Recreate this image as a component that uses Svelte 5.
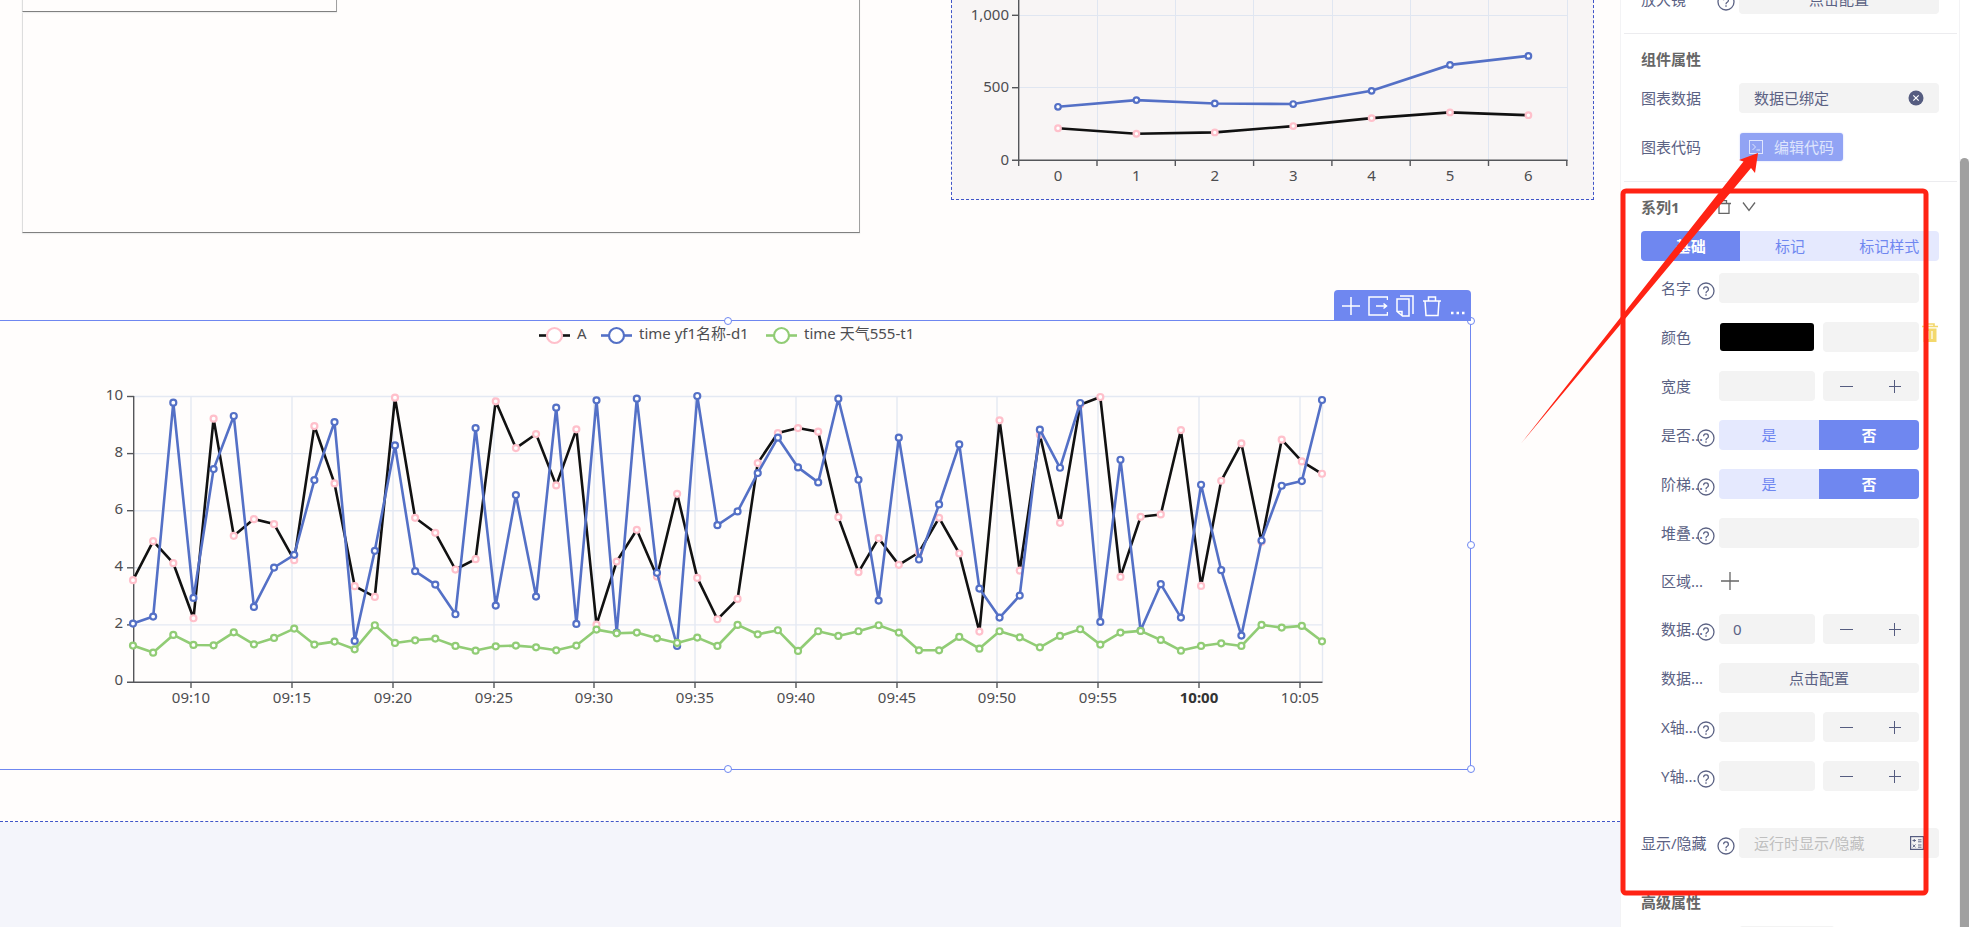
<script>
  const rows = [
    { id: 'name', label: '名字', help: true, kind: 'text' },
    { id: 'color', label: '颜色', help: false, kind: 'color' },
    { id: 'width', label: '宽度', help: false, kind: 'number', value: '' },
    { id: 'smooth', label: '是否...', help: true, kind: 'toggle' },
    { id: 'step', label: '阶梯...', help: true, kind: 'toggle' },
    { id: 'stack', label: '堆叠...', help: true, kind: 'text' },
    { id: 'area', label: '区域...', help: false, kind: 'add' },
    { id: 'offset', label: '数据...', help: true, kind: 'number', value: '0' },
    { id: 'dataset', label: '数据...', help: false, kind: 'config' },
    { id: 'xaxis', label: 'X轴...', help: true, kind: 'number', value: '' },
    { id: 'yaxis', label: 'Y轴...', help: true, kind: 'number', value: '' }
  ];

  // Readings are stored as counts; 857 counts are 10 units on the axis.
  const FULL = 857;
  const series = [
    { name: 'A', line: '#111', dot: '#ffc0cb', data: [305,422,356,191,789,438,488,473,365,767,595,287,255,852,492,447,337,368,841,701,743,589,757,172,361,456,316,564,312,188,249,656,746,761,750,494,329,431,351,388,492,385,151,784,334,741,477,831,854,315,495,502,755,288,603,715,420,726,661,624] },
    { name: 'time yf1名称-d1', line: '#5470c6', dot: '#5470c6', data: [175,196,837,252,638,797,225,343,381,605,779,123,393,709,332,292,203,761,229,560,256,822,174,844,148,849,327,108,857,470,511,626,732,643,598,849,606,244,732,367,532,712,280,193,259,756,642,836,180,666,154,293,193,591,335,139,424,588,602,845] },
    { name: 'time 天气555-t1', line: '#91cc75', dot: '#91cc75', data: [109,88,141,111,110,149,113,132,160,112,121,98,170,117,125,130,108,94,107,109,104,95,109,157,146,148,131,117,133,108,171,143,155,93,152,138,152,170,148,95,95,135,100,152,134,104,138,158,112,148,153,126,94,108,116,108,171,163,168,122] }
  ];
  const px = (i) => 133 + (i * 1189) / 59;
  const py = (v) => 362 - (v / FULL) * 286;
  const times = ['09:10','09:15','09:20','09:25','09:30','09:35','09:40','09:45','09:50','09:55','10:00','10:05'];
  const tx = (i) => Math.round(191.3 + i * 100.75);
  const legendX = [539, 601, 766];

  const small = [
    { line: '#111', dot: '#ffc0cb', data: [219, 181, 190, 234, 289, 328, 309] },
    { line: '#5470c6', dot: '#5470c6', data: [367, 413, 390, 386, 477, 656, 718] }
  ];
  const sx = (i) => 106 + i * 78.4;
  const sy = (v) => 160 - v * 0.145;
  const path = (data, fx, fy) => data.map((v, i) => `${fx(i).toFixed(1)},${fy(v).toFixed(1)}`).join(' ');
</script>

{#snippet help()}
  <button class="help" aria-label="帮助">
    <svg viewBox="0 0 18 18" width="18" height="18" fill="none" stroke="#5b6284" stroke-width="1.3">
      <circle cx="9" cy="9" r="8" />
      <path d="M6.6 7.2a2.4 2.4 0 1 1 3.6 2.1c-.8.5-1.2.9-1.2 1.9" />
      <circle cx="9" cy="13" r=".5" fill="#5b6284" stroke-width=".6" />
    </svg>
  </button>
{/snippet}

<div class="app">
  <main class="stage">
    <div class="sheet">
      <div class="frame outer"></div>
      <div class="frame inner"></div>

      <div class="mini">
        <svg width="641" height="199" role="img" aria-label="折线图">
          <g stroke="#e0e6f1">
            {#each [1, 2, 3, 4, 5, 6, 7] as i}
              <line x1={Math.round(66.5 + i * 78.3) + 0.5} x2={Math.round(66.5 + i * 78.3) + 0.5} y1="0" y2="160" />
            {/each}
            <line x1="67" x2="615" y1="15.5" y2="15.5" />
            <line x1="67" x2="615" y1="87.5" y2="87.5" />
          </g>
          <g stroke="#55565a" stroke-width="1.4">
            <line x1="66.7" x2="66.7" y1="0" y2="166" />
            <line x1="60" x2="615.5" y1="160.3" y2="160.3" />
            <line x1="60" x2="67" y1="15.3" y2="15.3" />
            <line x1="60" x2="67" y1="87.7" y2="87.7" />
            {#each [1, 2, 3, 4, 5, 6, 7] as i}
              <line x1={66.7 + i * 78.3} x2={66.7 + i * 78.3} y1="160" y2="166" />
            {/each}
          </g>
          {#each small as s}
            <polyline points={path(s.data, sx, sy)} fill="none" stroke={s.line} stroke-width="2.6" />
            {#each s.data as v, i}
              <circle cx={sx(i)} cy={sy(v)} r="2.8" fill="#fff" stroke={s.dot} stroke-width="2.2" />
            {/each}
          {/each}
          <g class="axis" text-anchor="end">
            <text x="57" y="20">1,000</text>
            <text x="57" y="92">500</text>
            <text x="57" y="165">0</text>
          </g>
          <g class="axis" text-anchor="middle">
            {#each [0, 1, 2, 3, 4, 5, 6] as n}
              <text x={sx(n)} y="181">{n}</text>
            {/each}
          </g>
        </svg>
      </div>

      <div class="selected">
        <svg class="chart" width="1470" height="449" role="img" aria-label="时间折线图">
          <g stroke="#e4e9f3" stroke-width="1.4">
            {#each [0, 1, 2, 3, 4] as g}
              <line x1="134" x2="1322" y1={76.5 + g * 57.1} y2={76.5 + g * 57.1} />
            {/each}
            {#each times as _, i}
              <line x1={tx(i)} x2={tx(i)} y1="76" y2="362" />
            {/each}
            <line x1="1322.5" x2="1322.5" y1="76" y2="362" />
          </g>
          <g stroke="#55565a" stroke-width="1.4">
            <line x1="133.7" x2="133.7" y1="76" y2="362" />
            <line x1="127" x2="1322.5" y1="362.3" y2="362.3" />
            {#each [0, 1, 2, 3, 4] as g}
              <line x1="127" x2="134" y1={76.5 + g * 57.1} y2={76.5 + g * 57.1} />
            {/each}
            {#each times as _, i}
              <line x1={tx(i)} x2={tx(i)} y1="362" y2="368" />
            {/each}
          </g>
          {#each series as s}
            <polyline points={path(s.data, px, py)} fill="none" stroke={s.line} stroke-width="2.6" stroke-linejoin="bevel" />
            {#each s.data as v, i}
              <circle cx={px(i)} cy={py(v)} r="3" fill="#fff" stroke={s.dot} stroke-width="2.2" />
            {/each}
          {/each}
          <g class="axis" text-anchor="end">
            {#each [10, 8, 6, 4, 2, 0] as n, g}
              <text x="123" y={80 + g * 57}>{n}</text>
            {/each}
          </g>
          <g class="axis" text-anchor="middle">
            {#each times as t, i}
              <text x={tx(i)} y="383" class:bold={t === '10:00'}>{t}</text>
            {/each}
          </g>
          {#each series as s, i}
            <line x1={legendX[i]} x2={legendX[i] + 31} y1="15.5" y2="15.5" stroke={s.line} stroke-width="2.6" />
            <circle cx={legendX[i] + 15.5} cy="15.5" r="7.5" fill="#fff" stroke={s.dot} stroke-width="2.2" />
            <text class="axis" x={legendX[i] + 38} y="19">{s.name}</text>
          {/each}
        </svg>

        <i class="handle top"></i>
        <i class="handle top right"></i>
        <i class="handle mid right"></i>
        <i class="handle bottom right"></i>
        <i class="handle bottom"></i>

        <div class="tools">
          <button aria-label="添加"><svg viewBox="0 0 20 22" width="20" height="22"><path d="M10 2v18M1 11h18" /></svg></button>
          <button aria-label="导出"><svg viewBox="0 0 20 22" width="20" height="22"><path d="M19.500 5V2H1v18h18.500v-3M8 11h10M15.500 8.500l3 2.500-3 2.500" /></svg></button>
          <button aria-label="复制"><svg viewBox="0 0 20 22" width="20" height="22"><path d="M5 1h13v18M2 4h12v17H7.500L2 16.500zM2 16.500h5V21" /></svg></button>
          <button aria-label="删除"><svg viewBox="0 0 20 22" width="20" height="22"><path d="M1 6h18M3 6l1 14.500h12L17 6M6.500 6V2h7v4" /></svg></button>
          <button aria-label="更多"><svg viewBox="0 0 20 22" width="20" height="22"><path d="M2 18h2.500M7.500 18H10M13 18h2.500" stroke-width="2.500" /></svg></button>
        </div>
      </div>
    </div>
  </main>

  <aside class="panel">
    <div class="body">
      <section>
        <div class="row">
          <div class="cap"><label for="lens">放大镜</label>{@render help()}</div>
          <button id="lens" class="field config">点击配置</button>
        </div>
      </section>

      <section>
        <h3>组件属性</h3>
        <div class="stack">
          <div class="row">
            <div class="cap"><label for="bound">图表数据</label></div>
            <div class="field wrap">
              <input id="bound" value="数据已绑定" readonly />
              <button aria-label="清除">
                <svg viewBox="0 0 16 16" width="16" height="16"><circle cx="8" cy="8" r="7.500" fill="#555c80" /><path d="M5.300 5.300l5.400 5.400M10.700 5.300l-5.400 5.400" stroke="#fff" stroke-width="1.200" /></svg>
              </button>
            </div>
          </div>
          <div class="row">
            <div class="cap"><label for="code">图表代码</label></div>
            <button id="code" class="code">
              <svg viewBox="0 0 14 14" width="14" height="14" fill="none" stroke="#dfe5fd"><rect x=".5" y=".5" width="13" height="13" /><path d="M3.500 4l3 3-3 3M7.500 10H11" /></svg>
              编辑代码
            </button>
          </div>
        </div>
      </section>

      <section class="last">
        <div class="head">
          <h3>系列1</h3>
          <button aria-label="删除系列"><svg viewBox="0 0 14 14" width="14" height="14"><path d="M0 3.500h14M2 3.500v10h10v-10M4.500 3.500V.7h5v2.800" /></svg></button>
          <button aria-label="展开"><svg viewBox="0 0 14 14" width="14" height="14"><path d="M1 2.500l6 8 6-8" /></svg></button>
        </div>
        <div class="tabs">
          <button class="on">基础</button>
          <button>标记</button>
          <button>标记样式</button>
        </div>

        <div class="group">
          {#each rows as r}
            <div class="row" class:short={r.kind === 'add'}>
              <div class="cap small">
                <label for={r.id}>{r.label}</label>
                {#if r.help}{@render help()}{/if}
              </div>
              {#if r.kind === 'text'}
                <input id={r.id} class="field" />
              {:else if r.kind === 'color'}
                <div class="pair">
                  <button class="swatch" aria-label="选择颜色"></button>
                  <input id={r.id} class="field" />
                  <button class="drop" aria-label="清除颜色">
                    <svg viewBox="0 0 16 20" width="16" height="20" fill="none" stroke="#f3d86c"><path d="M0 3.500h16M4 3V1h8v2" stroke-width="1.600" /><path d="M1.500 5.500h13V19h-13z" fill="#f3d86c" stroke="none" /><path d="M6 8v8M10 8v8" stroke="#fff" stroke-width="1.200" /></svg>
                  </button>
                </div>
              {:else if r.kind === 'number'}
                <div class="pair">
                  <input id={r.id} class="field" value={r.value} />
                  <div class="stepper">
                    <button aria-label="减少"><svg viewBox="0 0 14 14" width="14" height="14"><path d="M0 7.500h13" /></svg></button>
                    <button aria-label="增加"><svg viewBox="0 0 14 14" width="14" height="14"><path d="M1 7.500h12M6.500 1v13" /></svg></button>
                  </div>
                </div>
              {:else if r.kind === 'toggle'}
                <div class="toggle">
                  <button id={r.id}>是</button>
                  <button class="on">否</button>
                </div>
              {:else if r.kind === 'add'}
                <button id={r.id} class="add" aria-label="添加区域">
                  <svg viewBox="0 0 18 18" width="18" height="18"><path d="M0 9h18M9 0v18" /></svg>
                </button>
              {:else}
                <button id={r.id} class="field config">点击配置</button>
              {/if}
            </div>
          {/each}
        </div>

        <div class="row visibility">
          <div class="cap"><label for="visible">显示/隐藏</label>{@render help()}</div>
          <div class="field wrap">
            <input id="visible" placeholder="运行时显示/隐藏" />
            <button aria-label="表达式">
              <svg viewBox="0 0 14 14" width="14" height="14" fill="none" stroke="#555c80"><rect x=".6" y=".6" width="12.800" height="12.800" stroke-width="1.200" /><path d="M2.500 4.500h3.500M4.250 3v3M8 3.800h3.500M8 5.800h3.500M2.700 8.500l2.800 2.800M5.500 8.500l-2.800 2.800M8 9h3.500M8 11.200h3.500" stroke-width=".9" /></svg>
            </button>
          </div>
        </div>

        <h3 class="advanced">高级属性</h3>
        <div class="row">
          <div class="cap"></div>
          <div class="pair half"><div class="field"></div></div>
        </div>
      </section>
    </div>
    <div class="track"><div class="thumb"></div></div>
  </aside>

  <svg class="markup" width="420" height="760" aria-hidden="true">
    <rect x="114" y="51" width="303" height="702" rx="3" fill="none" stroke="#ff2314" stroke-width="5" />
    <path d="M12 303.500L234.500 21.500 230 20 249 13 246 33 242 28 12 303.500z" fill="#ff2314" />
  </svg>
</div>

<style>
  :global(body) { margin: 0; }
  .app {
    position: relative;
    display: flex;
    height: 100vh;
    overflow: hidden;
    background: #fff;
    color: #5b6284;
    font: 15px/22px "Noto Sans", "Noto Sans CJK SC", sans-serif;
  }
  button, input {
    box-sizing: border-box;
    margin: 0;
    padding: 0;
    border: 0;
    background: none;
    color: inherit;
    font: inherit;
    outline: none;
  }
  svg { display: block; flex: none; }

  .stage {
    flex: 1;
    min-width: 0;
    position: relative;
    overflow: hidden;
    background: #f4f5fb;
  }
  .sheet {
    position: relative;
    height: 821px;
    border-bottom: 1px dashed #4055c8;
    background: #fffdfc;
  }
  .frame {
    position: absolute;
    box-sizing: border-box;
    top: -2px;
    left: 22px;
    border: 1px solid #808080;
    border-left-color: #ddd;
    border-right-color: #a0a0a0;
    box-shadow: 0 1px 1px #eee;
  }
  .outer { width: 838px; height: 235px; }
  .inner { width: 315px; height: 14px; }
  .mini {
    position: absolute;
    top: 0;
    left: 951px;
    height: 199px;
    border: 1px dashed #4055c8;
    border-top: 0;
    background: #f8f5f5;
  }
  .axis { fill: #4d4d50; font-size: 15px; }
  .bold { font-weight: 700; fill: #333; }

  .selected {
    position: absolute;
    top: 320px;
    left: -1px;
    border: 1px solid #6f87f0;
  }
  .chart { margin-top: -1px; }
  .handle {
    position: absolute;
    box-sizing: border-box;
    width: 8px;
    height: 8px;
    left: 724px;
    border: 1px solid #6f87f0;
    border-radius: 50%;
    background: #fff;
  }
  .handle.top { top: -4px; }
  .handle.mid { top: 220px; }
  .handle.bottom { bottom: -4px; }
  .handle.right { left: auto; right: -5px; }
  .tools {
    position: absolute;
    right: -1px;
    bottom: 448px;
    display: flex;
    align-items: center;
    gap: 7px;
    height: 31px;
    padding: 0 2px 0 7px;
    border-radius: 4px 4px 0 0;
    background: #6f87f0;
  }
  .tools svg { fill: none; stroke: #fff; stroke-width: 1.5; }

  .panel {
    flex: none;
    width: 348px;
    display: flex;
    border-left: 1px solid #f3f3f5;
  }
  .body {
    flex: 1;
    min-width: 0;
    margin-top: -16px;
    padding: 0 2px 0 3px;
  }
  section {
    padding: 0 18px 19px 17px;
    border-bottom: 1px solid #ececef;
  }
  section.last { border: 0; }
  h3 {
    margin: 0;
    padding-top: 14px;
    color: #666;
    font: inherit;
    font-weight: 700;
  }
  .stack { display: grid; gap: 19px; margin-top: 13px; }
  .row { display: flex; align-items: center; height: 30px; }
  .row.short { height: 28px; }
  .cap { flex: none; display: flex; align-items: center; width: 98px; }
  .cap label { width: 76px; white-space: nowrap; }
  .cap.small { width: 58px; }
  .cap.small label { width: 36px; }
  .help { flex: none; padding-top: 5px; }
  .field {
    flex: 1;
    width: 100%;
    min-width: 0;
    height: 30px;
    padding: 0 15px;
    border-radius: 4px;
    background: #f3f3f3;
  }
  .wrap { display: flex; align-items: center; box-sizing: border-box; }
  .wrap input { flex: 1; width: 100%; min-width: 0; }
  .wrap input::placeholder { color: #bfbfbf; opacity: 1; }
  .code {
    display: flex;
    align-items: center;
    gap: 11px;
    height: 28px;
    margin-left: 1px;
    padding: 0 9px;
    border-radius: 3px;
    background: #91a3f4;
    color: #dfe5fd;
    box-shadow: 0 0 2px #c9d2fb;
  }
  .head { display: flex; align-items: center; padding-top: 14px; gap: 11px; }
  .head h3 { width: 65px; padding: 0; }
  .head svg, .add svg { fill: none; stroke: #666; stroke-width: 1.3; }
  .tabs, .toggle {
    display: flex;
    height: 30px;
    overflow: hidden;
    border-radius: 4px;
    background: #e5e9fe;
    color: #6f87f0;
  }
  .tabs { margin-top: 13px; }
  .toggle { flex: 1; min-width: 0; }
  .tabs button, .toggle button { flex: 1; }
  .tabs .on, .toggle .on { background: #6f87f0; color: #fff; font-weight: 700; }
  .group {
    display: grid;
    grid-template-columns: minmax(0, 1fr);
    gap: 19px;
    margin-top: 12px;
    padding: 0 20px;
  }
  .stack { grid-template-columns: minmax(0, 1fr); }
  .pair {
    position: relative;
    flex: 1;
    min-width: 0;
    display: grid;
    grid-template-columns: repeat(2, minmax(0, 1fr));
    align-items: center;
    gap: 8px;
  }
  .pair .field { box-sizing: border-box; padding: 0 14px; }
  .swatch { height: 28px; margin: 0 1px; border-radius: 3px; background: #000; }
  .drop { position: absolute; left: 203px; top: 1px; }
  .stepper { display: flex; height: 30px; border-radius: 4px; background: #f3f3f3; }
  .stepper button { flex: 1; display: grid; place-items: center; }
  .stepper svg { fill: none; stroke: #555c80; }
  .add { padding-left: 2px; }
  .visibility { margin-top: 37px; }
  .advanced { margin-top: 33px; padding: 0 0 13px; }
  .track { width: 10px; padding-top: 158px; border-left: 1px solid #f3f3f5; box-sizing: border-box; }
  .thumb { height: 100%; border-radius: 5px 5px 0 0; background: #a0a0a0; }
  .markup { position: absolute; right: 40px; top: 140px; pointer-events: none; }
</style>
